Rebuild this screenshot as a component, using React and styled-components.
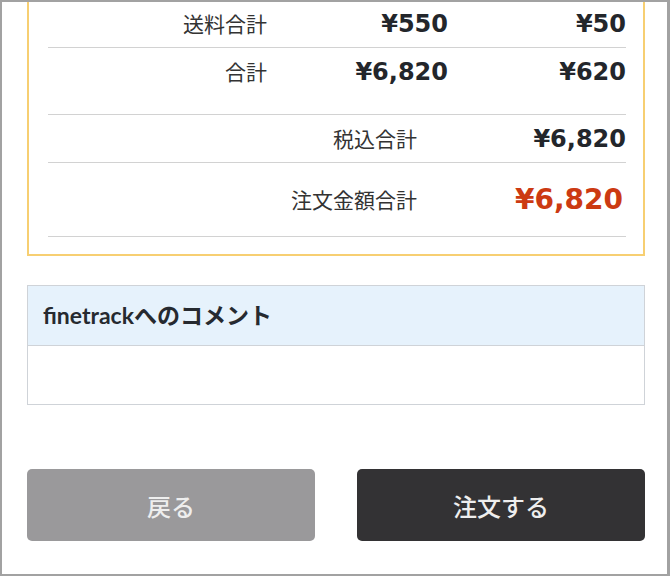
import React from 'react';
import styled, { createGlobalStyle } from 'styled-components';

const GlobalStyle = createGlobalStyle`
  * { box-sizing: border-box; }
  body {
    margin: 0;
    background: #ffffff;
    font-family: "Noto Sans CJK JP", "Noto Sans", sans-serif;
    color: #333333;
  }
`;

export default function App() {
  return (
    <>
      <GlobalStyle />
      <Frame>
        <TotalsCard>
          <FeeTable>
            <FeeRow>
              <Label>送料合計</Label>
              <Amount>¥550</Amount>
              <Amount>¥50</Amount>
            </FeeRow>
            <FeeRow last>
              <Label>合計</Label>
              <Amount>¥6,820</Amount>
              <Amount>¥620</Amount>
            </FeeRow>
          </FeeTable>
          <SumTable>
            <SumRow>
              <Label>税込合計</Label>
              <Amount>¥6,820</Amount>
            </SumRow>
            <SumRow tall>
              <Label>注文金額合計</Label>
              <Amount red>¥6,820</Amount>
            </SumRow>
          </SumTable>
        </TotalsCard>

        <CommentBox>
          <CommentHead>finetrackへのコメント</CommentHead>
          <CommentBody />
        </CommentBox>

        <Actions>
          <ActionButton>戻る</ActionButton>
          <ActionButton primary>注文する</ActionButton>
        </Actions>
      </Frame>
    </>
  );
}

const Frame = styled.div`
  width: 670px;
  height: 576px;
  overflow: hidden;
  border: 2px solid #a2a2a2;
  border-right-width: 3px;
  padding: 0 22px 0 25px;
  background: #ffffff;
`;

const TotalsCard = styled.div`
  margin-top: -4px;
  border: 2px solid #f7cf72;
  padding: 0 17px 17px 19px;
`;

const FeeTable = styled.div`
  display: flex;
  flex-direction: column;
  margin-bottom: 19px;
`;

const FeeRow = styled.div`
  display: grid;
  grid-template-columns: 219px 181px 1fr;
  align-items: center;
  height: ${(p) => (p.last ? '47px' : '48px')};
  border-bottom: ${(p) => (p.last ? 'none' : '1px solid #d2d2d2')};
`;

const SumTable = styled.div`
  display: flex;
  flex-direction: column;
  border-top: 1px solid #d2d2d2;
`;

const SumRow = styled.div`
  display: grid;
  grid-template-columns: 369px 1fr;
  align-items: center;
  height: ${(p) => (p.tall ? '74px' : '48px')};
  border-bottom: 1px solid #d2d2d2;
`;

const Label = styled.div`
  text-align: right;
  font-size: 21px;
  color: #333333;
  line-height: 1;
`;

const Amount = styled.div`
  text-align: right;
  font-family: "DejaVu Sans", sans-serif;
  font-weight: bold;
  font-size: ${(p) => (p.red ? '28px' : '24px')};
  color: ${(p) => (p.red ? '#cc3a12' : '#23262b')};
  padding-right: ${(p) => (p.red ? '3px' : '0')};
  line-height: 1;
`;

const CommentBox = styled.div`
  margin-top: 29px;
  border: 1px solid #cfd3d8;
`;

const CommentHead = styled.div`
  display: flex;
  align-items: center;
  height: 60px;
  padding: 0 15px 3px;
  background: #e6f2fc;
  border-bottom: 1px solid #cfd3d8;
  font-family: Lato, "Noto Sans CJK JP", sans-serif;
  font-weight: bold;
  font-size: 23px;
  color: #262a30;
`;

const CommentBody = styled.div`
  height: 58px;
  background: #ffffff;
`;

const Actions = styled.div`
  display: grid;
  grid-template-columns: 288px 288px;
  justify-content: space-between;
  margin-top: 64px;
`;

const ActionButton = styled.button`
  height: 72px;
  border: none;
  border-radius: 5px;
  background: ${(p) => (p.primary ? '#333234' : '#9a999b')};
  color: #eeeeee;
  font-family: "Noto Sans CJK JP", sans-serif;
  font-size: 24px;
  font-weight: 500;
  cursor: pointer;
`;
